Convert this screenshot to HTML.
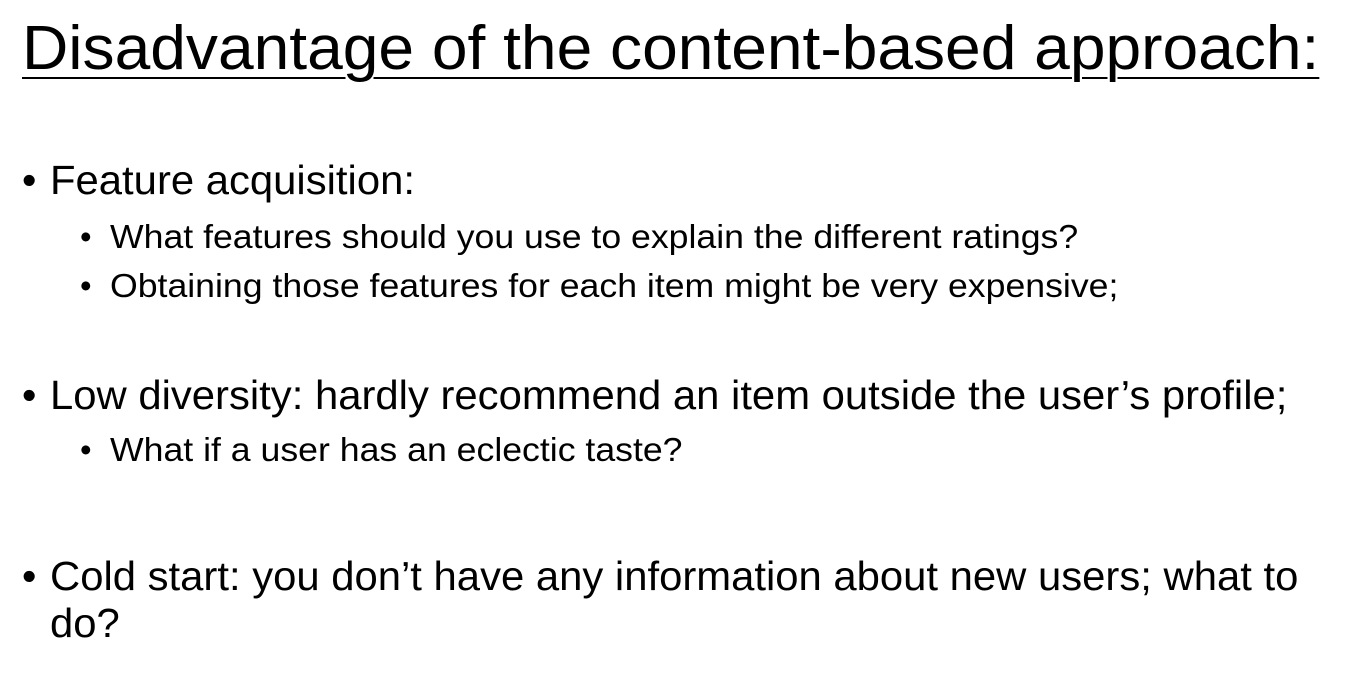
<!DOCTYPE html>
<html><head><meta charset="utf-8"><style>
html,body{margin:0;padding:0;background:#fff;width:1360px;height:679px;overflow:hidden}
body{position:relative;font-family:"Liberation Sans",sans-serif;color:#000}
.l{position:absolute;white-space:nowrap;line-height:1;transform-origin:0 0}
.t{font-size:62px;left:22px;top:18px;text-decoration:underline;text-decoration-thickness:2px;text-underline-offset:8px;transform:scaleX(1.034)}
.a{font-size:41px;transform:scaleX(1.02);left:50px}
.b{font-size:33px;transform:scaleX(1.08);left:110px}
.ba{font-size:41px;left:22px}
.bb{font-size:33px;left:80px}
</style></head><body>
<div class="l t">Disadvantage of the content-based approach:</div>
<div class="l ba" style="top:160px">•</div><div class="l a" style="top:160px">Feature acquisition:</div>
<div class="l bb" style="top:220px">•</div><div class="l b" style="top:220px">What features should you use to explain the different ratings?</div>
<div class="l bb" style="top:269px">•</div><div class="l b" style="top:269px">Obtaining those features for each item might be very expensive;</div>
<div class="l ba" style="top:375px">•</div><div class="l a" style="top:375px">Low diversity: hardly recommend an item outside the user’s profile;</div>
<div class="l bb" style="top:433px">•</div><div class="l b" style="top:433px">What if a user has an eclectic taste?</div>
<div class="l ba" style="top:556px">•</div><div class="l a" style="top:556px">Cold start: you don’t have any information about new users; what to</div>
<div class="l a" style="top:603px">do?</div>
</body></html>
